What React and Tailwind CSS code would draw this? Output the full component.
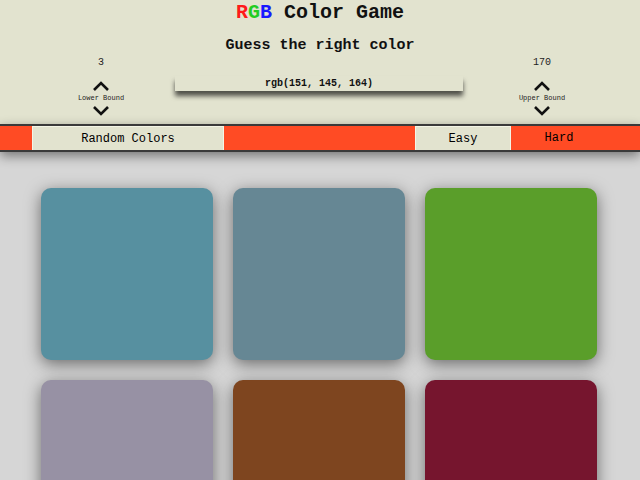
import React from "react";

const cards = ["#5790a0", "#668794", "#5a9e2a", "#9791a4", "#7e451f", "#76152e"];

function Chevron({ down }) {
    return (
        <svg width="18" height="11" viewBox="0 0 18 11" className="block">
            <path
                d={down ? "M2 2 L9 9 L16 2" : "M2 9 L9 2 L16 9"}
                fill="none"
                stroke="#111"
                strokeWidth="2.6"
            />
        </svg>
    );
}

function Bound({ value, label }) {
    return (
        <div className="w-[100px] flex flex-col items-center">
            <div className="text-[10px] leading-[12px] text-[#222]">{value}</div>
            <div className="mt-[12px]"><Chevron /></div>
            <div className="text-[7px] leading-[8px] mt-[2px] text-[#222]">{label}</div>
            <div className="mt-[3px]"><Chevron down /></div>
        </div>
    );
}

export default function App() {
    return (
        <div className="min-h-[480px] bg-[#d6d6d6] font-['Liberation_Mono',monospace] overflow-hidden">
            {/* Header */}
            <header className="bg-[#e2e3cf] h-[124px] pt-[2px]">
                <h1 className="text-center text-[20px] leading-[22px] font-bold text-[#111]">
                    <span className="text-[#ff1a1a]">R</span>
                    <span className="text-[#22cc22]">G</span>
                    <span className="text-[#1a1aff]">B</span> Color Game
                </h1>
                <h2 className="text-center text-[15px] leading-[18px] font-bold text-[#111] mt-[13px]">
                    Guess the right color
                </h2>
                <div className="flex items-start pl-[51px] mt-[2px]">
                    <Bound value="3" label="Lower Bound" />
                    <div className="ml-[24px] mt-[19px] w-[288px] h-[15px] bg-[#e2e3cf] shadow-[0_5px_5px_rgba(0,0,0,0.65)] flex items-center justify-center text-[10px] font-bold text-[#111]">
                        rgb(151, 145, 164)
                    </div>
                    <div className="ml-[29px]">
                        <Bound value="170" label="Upper Bound" />
                    </div>
                </div>
            </header>

            {/* Nav bar */}
            <nav className="relative z-10 flex h-[28px] bg-[#ff4b24] border-t-2 border-b-2 border-[#3a3a3a] shadow-[0_4px_12px_rgba(0,0,0,0.45)] text-[12px] text-[#000]">
                <div className="w-[32px]" />
                <button className="w-[192px] bg-[#e2e3cf] border-t border-x border-[#f4f5e6]">Random Colors</button>
                <div className="w-[191px]" />
                <button className="w-[96px] bg-[#e2e3cf] border-t border-x border-[#f4f5e6]">Easy</button>
                <button className="w-[96px]">Hard</button>
            </nav>

            {/* Squares */}
            <main className="grid grid-cols-[repeat(3,172px)] gap-[20px] justify-center pt-[36px] pr-[2px]">
                {cards.map((c) => (
                    <div
                        key={c}
                        className="h-[172px] rounded-[10px] shadow-[0_4px_16px_rgba(0,0,0,0.5)]"
                        style={{ backgroundColor: c }}
                    />
                ))}
            </main>
        </div>
    );
}
